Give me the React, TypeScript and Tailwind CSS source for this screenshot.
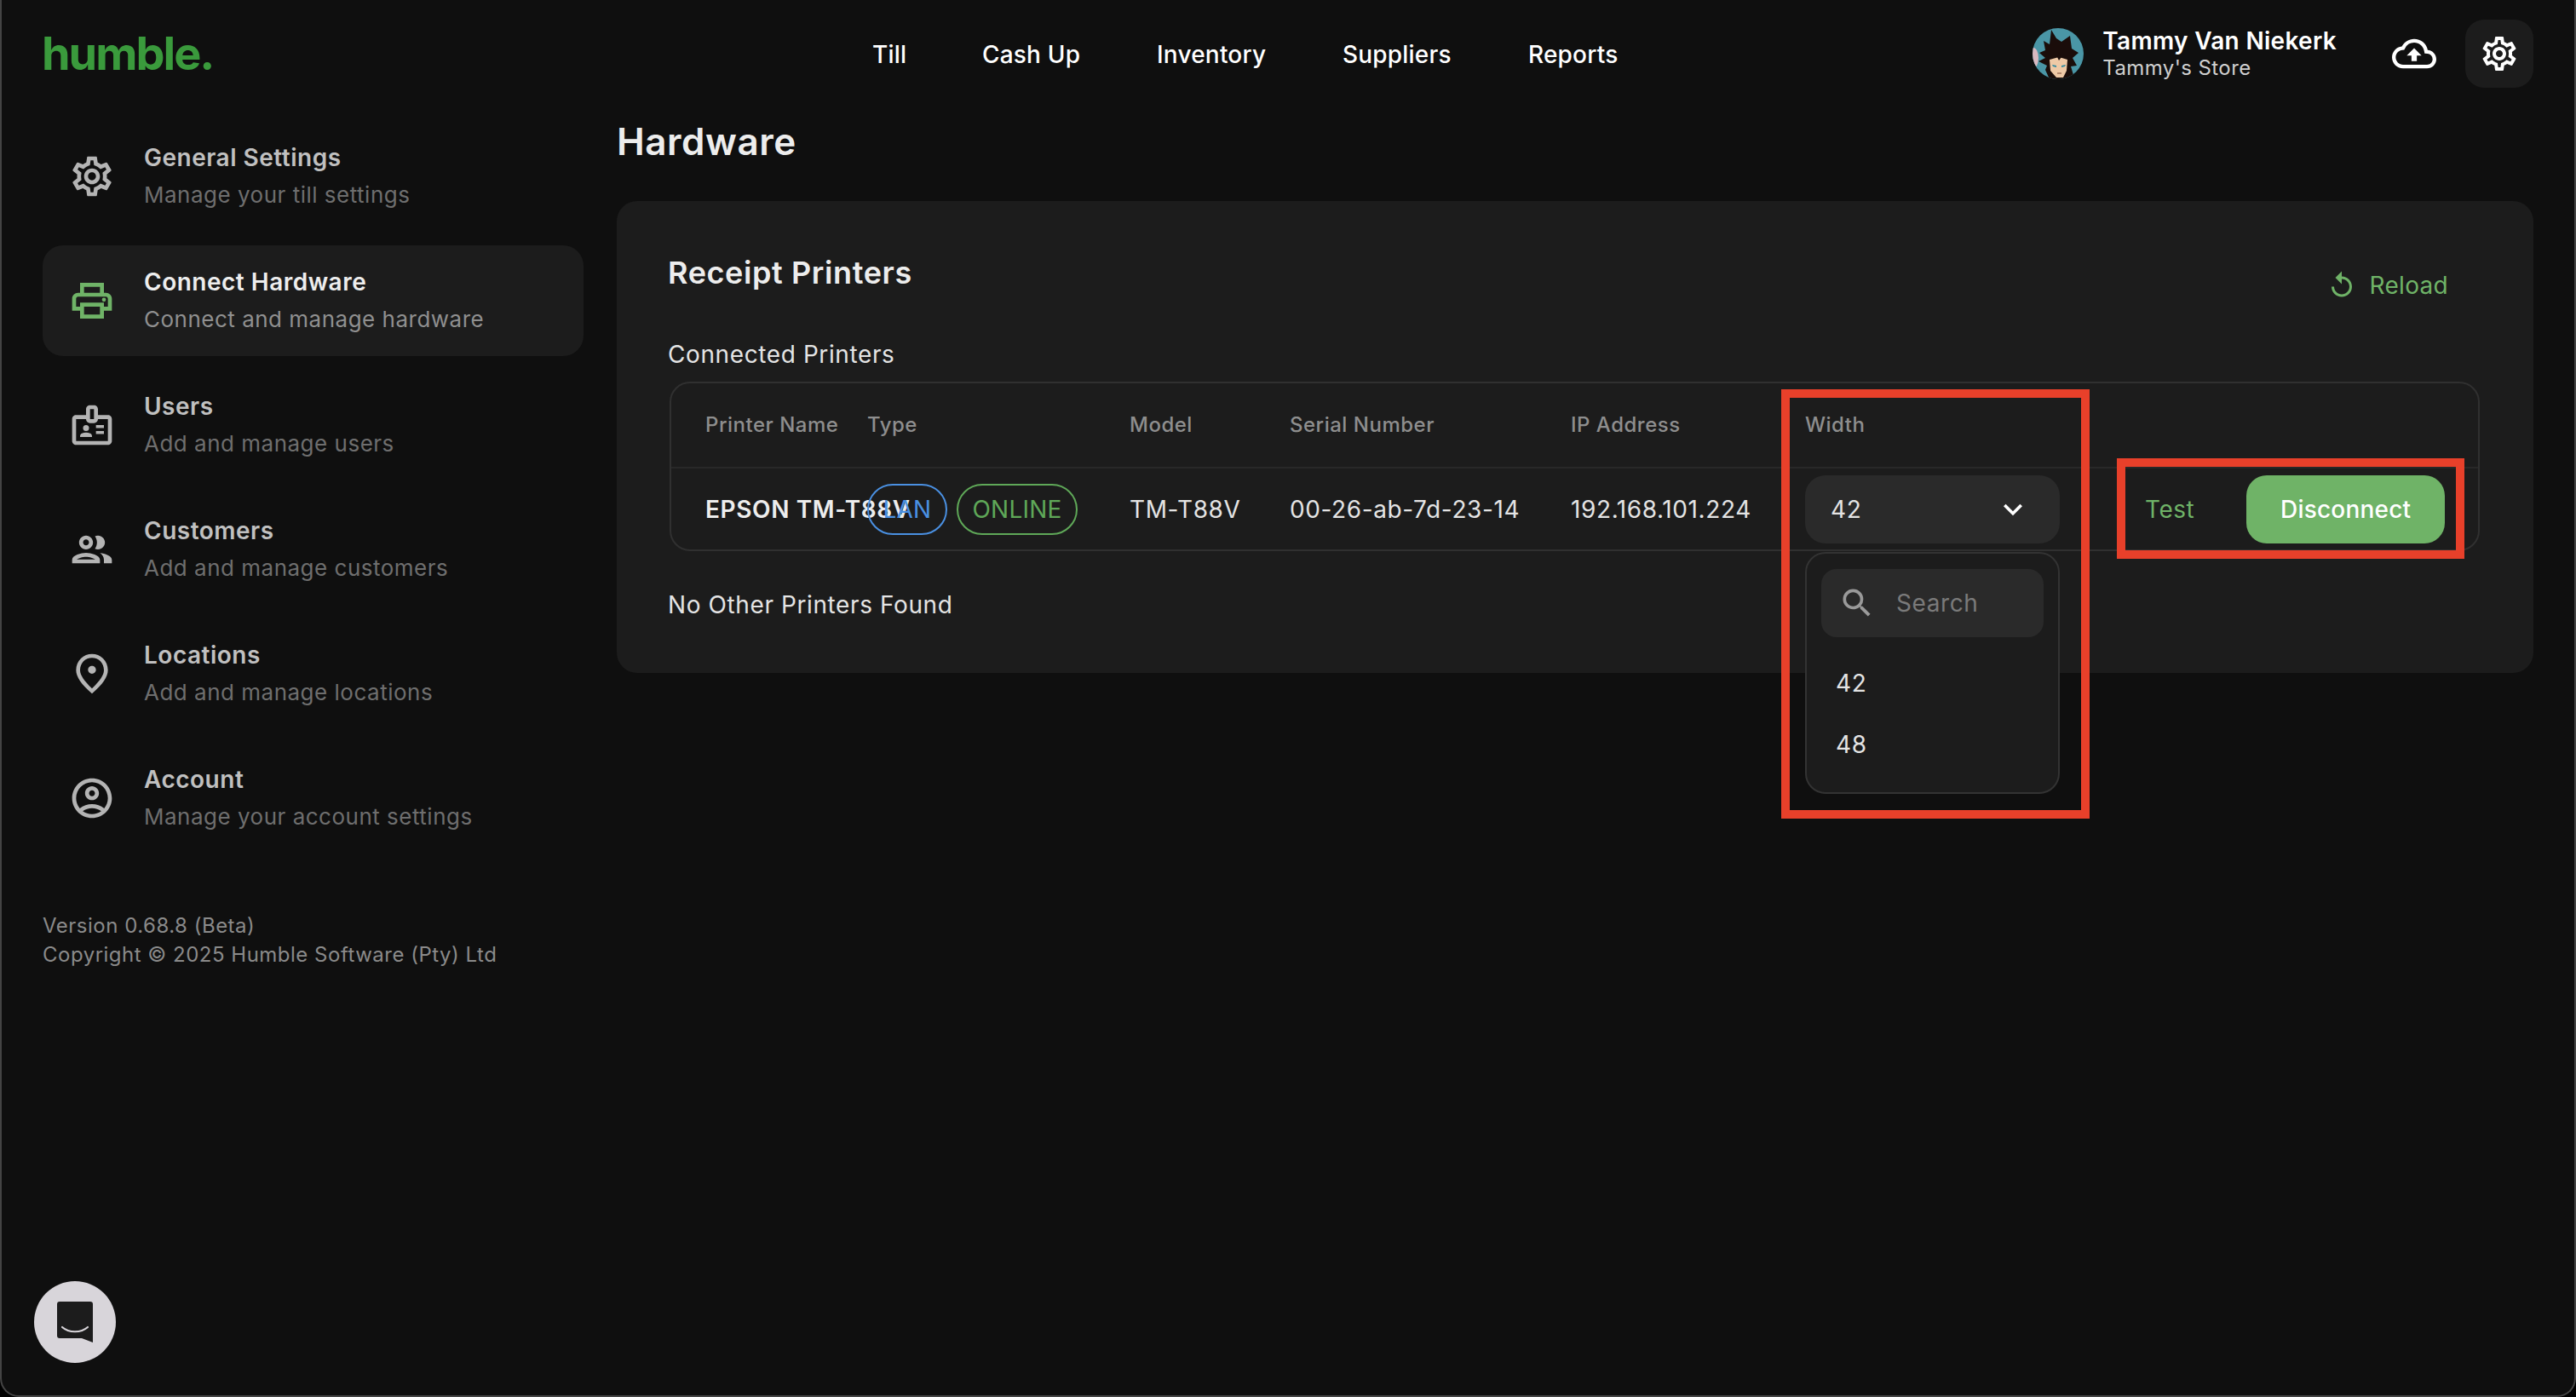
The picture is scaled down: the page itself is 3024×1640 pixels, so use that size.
import type { ReactNode } from "react"
import {
  MdOutlinePrint,
  MdOutlineBadge,
  MdOutlinePeople,
  MdOutlinePlace,
  MdOutlineAccountCircle,
  MdOutlineCloudUpload,
  MdReplay,
  MdSearch,
  MdKeyboardArrowDown,
} from "react-icons/md"

const navLinks = [
  { label: "Till", cls: "w-[129px]" },
  { label: "Cash Up", cls: "w-[205px]" },
  { label: "Inventory", cls: "w-[218px]" },
  { label: "Suppliers", cls: "w-[218px]" },
  { label: "Reports", cls: "w-auto" },
]

function Gear({ className }: { className?: string }) {
  return (
    <svg viewBox="0 0 24 24" fill="currentColor" className={className}>
      <path d="M19.43 12.98c.04-.32.07-.64.07-.98 0-.34-.03-.66-.07-.98l2.11-1.65c.19-.15.24-.42.12-.64l-2-3.46c-.09-.16-.26-.25-.44-.25-.06 0-.12.01-.17.03l-2.49 1c-.52-.4-1.08-.73-1.69-.98l-.38-2.65C14.46 2.18 14.25 2 14 2h-4c-.25 0-.46.18-.49.42l-.38 2.65c-.61.25-1.17.59-1.69.98l-2.49-1c-.06-.02-.12-.03-.18-.03-.17 0-.34.09-.43.25l-2 3.46c-.13.22-.07.49.12.64l2.11 1.65c-.04.32-.07.65-.07.98 0 .33.03.66.07.98l-2.11 1.65c-.19.15-.24.42-.12.64l2 3.46c.09.16.26.25.44.25.06 0 .12-.01.17-.03l2.49-1c.52.4 1.08.73 1.69.98l.38 2.65c.03.24.24.42.49.42h4c.25 0 .46-.18.49-.42l.38-2.65c.61-.25 1.17-.59 1.69-.98l2.49 1c.06.02.12.03.18.03.17 0 .34-.09.43-.25l2-3.46c.12-.22.07-.49-.12-.64l-2.11-1.65zm-1.98-1.71c.04.31.05.52.05.73 0 .21-.02.43-.05.73l-.14 1.13.89.7 1.08.84-.7 1.21-1.27-.51-1.04-.42-.9.68c-.43.32-.84.56-1.25.73l-1.06.43-.16 1.13-.2 1.35h-1.4l-.19-1.35-.16-1.13-1.06-.43c-.43-.18-.83-.41-1.23-.71l-.91-.7-1.06.43-1.27.51-.7-1.21 1.08-.84.89-.7-.14-1.13c-.03-.31-.05-.54-.05-.74s.02-.43.05-.73l.14-1.13-.89-.7-1.08-.84.7-1.21 1.27.51 1.04.42.9-.68c.43-.32.84-.56 1.25-.73l1.06-.43.16-1.13.2-1.35h1.39l.19 1.35.16 1.13 1.06.43c.43.18.83.41 1.23.71l.91.7 1.06-.43 1.27-.51.7 1.21-1.07.85-.89.7.14 1.13zM12 8c-2.21 0-4 1.79-4 4s1.79 4 4 4 4-1.79 4-4-1.79-4-4-4zm0 6c-1.1 0-2-.9-2-2s.9-2 2-2 2 .9 2 2-.9 2-2 2z" />
    </svg>
  )
}

const sideItems = [
  { title: "General Settings", sub: "Manage your till settings", icon: <Gear /> },
  { title: "Connect Hardware", sub: "Connect and manage hardware", icon: <MdOutlinePrint />, active: true },
  { title: "Users", sub: "Add and manage users", icon: <MdOutlineBadge /> },
  { title: "Customers", sub: "Add and manage customers", icon: <MdOutlinePeople /> },
  { title: "Locations", sub: "Add and manage locations", icon: <MdOutlinePlace /> },
  { title: "Account", sub: "Manage your account settings", icon: <MdOutlineAccountCircle /> },
]

const columns = "grid grid-cols-[190px_308px_188px_330px_275px_300px_1fr] pl-[40px] items-center"

function Avatar() {
  return (
    <svg viewBox="0 0 60 60" className="w-[60px] h-[60px] shrink-0">
      <defs>
        <clipPath id="avatar-clip">
          <circle cx="30" cy="30" r="30" />
        </clipPath>
      </defs>
      <g clipPath="url(#avatar-clip)">
        <rect width="60" height="60" fill="#4a96a6" />
        <ellipse cx="1" cy="35" rx="6" ry="12" fill="#d9b8c0" />
        <path
          d="M22 2 L28 12 L34 16 L44 9 L46 24 L54 29 L47 35 L52 44 L45 45 L48 55 L40 60 L20 60 L15 49 L17 44 L7 39 L15 35 L8 29 L15 26 L13 15 L20 19 Z"
          fill="#1a0d0a"
        />
        <path d="M20 37 L31 34 L41 37 L40 50 L36 58 L28 58 L21 50 Z" fill="#eec9a6" />
        <path d="M29 34 L31 29 L34 34 L31 38 Z" fill="#1a0d0a" />
        <path d="M23 43 L28 44 L28 46 L24 45 Z M34 44 L39 43 L38 45 L34 46 Z" fill="#2f8aa0" />
        <path d="M29 53 L34 53" stroke="#7a4a34" strokeWidth="1" />
      </g>
    </svg>
  )
}

function SideItem({ title, sub, icon, active }: { title: string; sub: string; icon: ReactNode; active?: boolean }) {
  return (
    <div className={`flex items-center h-[130px] rounded-[24px] pl-[30px] ${active ? "bg-[#1c1c1c]" : ""}`}>
      <div className={`w-[56px] h-[56px] text-[56px] leading-none shrink-0 [&>svg]:w-[56px] [&>svg]:h-[56px] ${active ? "text-[#6fb367]" : "text-[#b4b4b4]"}`}>
        {icon}
      </div>
      <div className="ml-[33px] flex flex-col gap-[14px]">
        <div className={`text-[28px] leading-[30px] font-semibold tracking-[0.5px] ${active ? "text-[#ededed]" : "text-[#c0c0c0]"}`}>{title}</div>
        <div className={`text-[26px] leading-[30px] tracking-[0.5px] ${active ? "text-[#8f8f8f]" : "text-[#6e6e6e]"}`}>{sub}</div>
      </div>
    </div>
  )
}

function Badge({ children, cls }: { children: ReactNode; cls: string }) {
  return (
    <span className={`h-[60px] flex items-center justify-center rounded-full border-2 text-[28px] tracking-[0.2px] ${cls}`}>{children}</span>
  )
}

export default function App() {
  return (
    <div
      className="relative w-[3024px] h-[1640px] bg-black overflow-hidden"
      style={{ fontFamily: "Inter, 'Noto Sans', sans-serif" }}
    >
      <div className="relative w-full h-full flex flex-col bg-[#0f0f0f] border-x-2 border-b-2 border-[#444444] rounded-b-[22px] pl-[48px] pr-[48px]">
        {/* top bar */}
        <header className="h-[128px] shrink-0 flex items-center">
          <div className="w-[975px] -ml-[1px] -mt-[2px] text-[54px] leading-none font-bold tracking-[-2px] text-[#3a9a3c]">humble.</div>
          <nav className="flex items-center text-[28px] font-medium tracking-[0.2px] text-white">
            {navLinks.map(link => (
              <div key={link.label} className={link.cls}>{link.label}</div>
            ))}
          </nav>
          <div className="ml-auto flex items-center -mt-[2px]">
            <Avatar />
            <div className="ml-[22px] flex flex-col gap-[2px] -mt-[2px]">
              <div className="text-[28px] leading-[34px] font-semibold tracking-[0.3px] text-white">Tammy Van Niekerk</div>
              <div className="text-[24px] leading-[26px] tracking-[0.4px] text-[#d0d0d0]">Tammy's Store</div>
            </div>
            <MdOutlineCloudUpload className="ml-[65px] w-[52px] h-[52px] text-white" />
            <div className="ml-[34px] w-[80px] h-[80px] rounded-[22px] bg-[#1c1c1c] flex items-center justify-center">
              <Gear className="w-[48px] h-[48px] text-white" />
            </div>
          </div>
        </header>

        <div className="flex flex-1 min-h-0">
          {/* sidebar */}
          <aside className="w-[635px] shrink-0 pt-[14px]">
            <div className="flex flex-col gap-[16px]">
              {sideItems.map(item => (
                <SideItem key={item.title} {...item} />
              ))}
            </div>
            <div className="mt-[68px] text-[24px] leading-[34px] tracking-[0.5px] text-[#8a8a8a]">
              <div>Version 0.68.8 (Beta)</div>
              <div>Copyright © 2025 Humble Software (Pty) Ltd</div>
            </div>
          </aside>

          {/* main */}
          <main className="ml-[39px] flex-1 min-w-0">
            <h1 className="text-[44px] leading-[52px] font-semibold tracking-[0.5px] text-[#ededed] mt-[12px]">Hardware</h1>
            <section className="relative mt-[44px] h-[554px] rounded-[24px] bg-[#1c1c1c] px-[60px] tracking-[0.6px]">
              <div className="flex items-start justify-between pt-[62px]">
                <h2 className="text-[36px] leading-[44px] font-semibold text-[#ededed]">Receipt Printers</h2>
                <div className="flex items-center mt-[16px] mr-[40px] text-[28px] tracking-[0.3px] text-[#6fb367]">
                  <MdReplay className="w-[36px] h-[36px]" />
                  <span className="ml-[15px]">Reload</span>
                </div>
              </div>
              <div className="mt-[43px] text-[28px] leading-[34px] text-[#e4e4e4]">Connected Printers</div>

              <div className="relative mt-[15px] ml-[2px] w-[2125px] h-[199px] rounded-[24px] border-2 border-[#303030]">
                <div className={`${columns} h-[100px] border-b-2 border-[#282828] text-[24px] font-medium tracking-[0.5px] text-[#8e8e8e]`}>
                  <div>Printer Name</div>
                  <div>Type</div>
                  <div>Model</div>
                  <div>Serial Number</div>
                  <div>IP Address</div>
                  <div>Width</div>
                </div>
                <div className={`${columns} h-[95px] text-[28px] text-[#e4e4e4]`}>
                  <div className="font-semibold whitespace-nowrap text-[#ededed]">EPSON TM-T88V</div>
                  <div className="flex gap-[11px]">
                    <Badge cls="w-[94px] border-[#4a90e2] text-[#4a90e2]">LAN</Badge>
                    <Badge cls="w-[142px] border-[#5fa858] text-[#5fa858]">ONLINE</Badge>
                  </div>
                  <div>TM-T88V</div>
                  <div>00-26-ab-7d-23-14</div>
                  <div>192.168.101.224</div>
                  <div className="w-[299px] h-[80px] rounded-[24px] bg-[#2a2a2a] flex items-center justify-between pl-[30px] pr-[33px]">
                    <span>42</span>
                    <MdKeyboardArrowDown className="w-[44px] h-[44px] text-white" />
                  </div>
                  <div className="flex items-center ml-[99px]">
                    <span className="text-[#6fb367] tracking-[0.5px]">Test</span>
                    <div className="ml-[61px] w-[233px] h-[80px] rounded-[24px] bg-[#6fb367] flex items-center justify-center font-medium tracking-[0.2px] text-white">
                      Disconnect
                    </div>
                  </div>
                </div>

                {/* width dropdown */}
                <div className="absolute left-[1331px] top-[198px] w-[299px] h-[284px] rounded-[24px] border-2 border-[#333333] bg-[#1c1c1c] z-10 px-[17px] pt-[18px]">
                  <div className="h-[80px] rounded-[18px] bg-[#2a2a2a] flex items-center pl-[20px] text-[28px] text-[#7a7a7a]">
                    <MdSearch className="w-[44px] h-[44px] text-[#9a9a9a]" />
                    <span className="ml-[24px]">Search</span>
                  </div>
                  <div className="mt-[37px] ml-[17px] text-[28px] leading-[34px] text-[#e4e4e4]">42</div>
                  <div className="mt-[38px] ml-[17px] text-[28px] leading-[34px] text-[#e4e4e4]">48</div>
                </div>
              </div>

              <div className="mt-[46px] text-[28px] leading-[34px] text-[#e4e4e4]">No Other Printers Found</div>
            </section>
          </main>
        </div>

        {/* chat launcher */}
        <div className="absolute left-[38px] top-[1504px] w-[96px] h-[96px] rounded-full bg-[#d8d5da] flex items-center justify-center">
          <svg viewBox="0 0 42 48" className="w-[42px] h-[48px]">
            <path
              d="M3 0 H39 A3 3 0 0 1 42 3 V48 L29 43 H3 A3 3 0 0 1 0 40 V3 A3 3 0 0 1 3 0 Z"
              fill="#1c1c1c"
            />
            <path d="M6 30 C14 37 28 37 36 30" fill="none" stroke="#d8d5da" strokeWidth="2.2" strokeLinecap="round" />
          </svg>
        </div>
      </div>

      {/* red annotation boxes */}
      <div className="absolute left-[2091px] top-[457px] w-[362px] h-[504px] border-[10px] border-[#e8402a] z-20" />
      <div className="absolute left-[2485px] top-[538px] w-[408px] h-[118px] border-[10px] border-[#e8402a] z-20" />
    </div>
  )
}
